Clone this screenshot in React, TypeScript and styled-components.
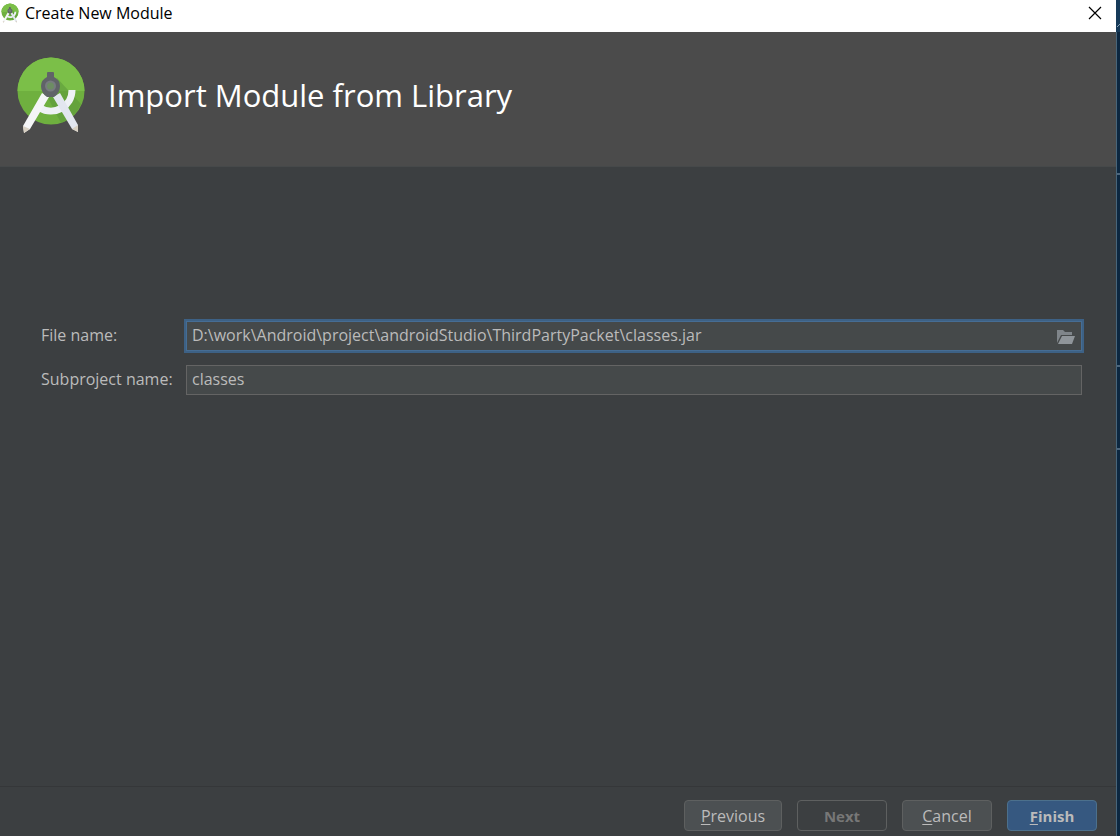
import React from 'react';
import styled, { createGlobalStyle } from 'styled-components';

const GlobalStyle = createGlobalStyle`
  * { box-sizing: border-box; }
  body {
    margin: 0;
    background: #0c2740;
    font-family: "Open Sans", "Noto Sans", sans-serif;
    font-size: 16px;
    line-height: 20px;
  }
  button, input { font: inherit; }
`;

const Desktop = styled.div`
  display: flex;
  min-height: 100vh;
`;

const Dialog = styled.main`
  flex: 1;
  min-width: 0;
  display: flex;
  flex-direction: column;
  background: #3c3f41;
  color: #bbbbbb;
`;

const Backdrop = styled.svg`
  flex: none;
  width: 4px;
  height: 836px;
`;

const TitleBar = styled.div`
  display: flex;
  align-items: center;
  gap: 5px;
  height: 32px;
  padding: 0 14px 6px 0;
  background: #ffffff;
  color: #000000;
`;

const WindowTitle = styled.span`
  flex: 1;
`;

const CloseButton = styled.button`
  display: flex;
  padding: 0;
  border: 0;
  background: none;
  color: #000000;
`;

const Header = styled.header`
  display: flex;
  align-items: flex-start;
  gap: 22px;
  height: 135px;
  padding: 24px 16px;
  background: #4b4b4b;
  border-bottom: 1px solid #46494a;
`;

const Heading = styled.h1`
  margin: 16px 0 0;
  color: #ffffff;
  font-size: 31px;
  font-weight: 400;
  line-height: 46px;
`;

const Form = styled.form`
  flex: 1;
  display: flex;
  flex-direction: column;
  gap: 14px;
  padding: 154px 34px 0 41px;
`;

const Field = styled.div`
  display: flex;
  align-items: center;
`;

const Label = styled.label`
  flex: none;
  width: 145px;
  padding-bottom: 2px;
`;

const InputBox = styled.div<{ $focused?: boolean }>`
  flex: 1;
  display: flex;
  align-items: center;
  height: 30px;
  padding: 0 5px;
  background: #45494a;
  border: 1px solid ${(p) => (p.$focused ? '#466d94' : '#646464')};
  box-shadow: ${(p) => (p.$focused ? '0 0 0 2px #3d6185' : 'none')};
`;

const TextInput = styled.input`
  flex: 1;
  min-width: 0;
  height: 26px;
  padding: 0 0 2px;
  border: 0;
  outline: 0;
  background: none;
  color: #bbbbbb;
`;

const BrowseButton = styled.button`
  display: flex;
  padding: 2px 0 0;
  border: 0;
  background: none;
`;

const Footer = styled.footer`
  display: flex;
  justify-content: flex-end;
  gap: 15px;
  padding: 13px 19px 5px;
  border-top: 1px solid #353739;
`;

const Button = styled.button<{ $primary?: boolean; $wide?: boolean }>`
  width: ${(p) => (p.$wide ? 98 : 90)}px;
  height: 31px;
  padding: 0;
  border: 1px solid ${(p) => (p.$primary ? '#4c708c' : '#5e6060')};
  border-radius: 4px;
  background: ${(p) => (p.$primary ? '#365880' : '#4c5052')};
  color: #bbbbbb;
  font-size: ${(p) => (p.$primary || p.disabled ? 15 : 16)}px;
  font-weight: ${(p) => (p.$primary ? 700 : 400)};

  &:disabled {
    background: #3c3f41;
    color: #777777;
    font-weight: 700;
  }
`;

const Mnemonic = styled.span`
  text-decoration: underline;
  text-decoration-thickness: 1px;
  text-underline-offset: 2px;
`;

function StudioLogo({ width, height }: { width: number; height: number }) {
  return (
    <svg width={width} height={height} viewBox="0 0 70 78" aria-hidden="true">
      <circle cx="35" cy="35" r="33.5" fill="#6fb03f" />
      <path d="M1.5 35a33.500 33.500 0 0 1 67 0z" fill="#7bbf48" />
      <path d="M41 22 65 48A33.500 33.500 0 0 1 45 67L32 42z" fill="#5b983b" opacity=".55" />
      <path d="M56 34A21 21 0 0 1 24 52" fill="none" stroke="#eef1f5" strokeWidth="7" />
      <path d="M26 37 33 41 14 73 8 77 7 70z" fill="#f4f5f7" />
      <path d="M37 41 44 37 62 69 62 76 56 73z" fill="#e2e6ef" />
      <path d="M7 70 14 73 8 77zM62 69 56 73 62 76z" fill="#d8d0c2" />
      <path d="M31 17q0-1 1-1h5q1 0 1 1v4q6 3 6 9 0 7-6 11h-7q-6-4-6-11 0-6 6-9z" fill="#606368" />
      <circle cx="34.500" cy="30" r="4.500" fill="#6d8d63" stroke="#777b7f" strokeWidth="2" />
    </svg>
  );
}

function FolderIcon() {
  return (
    <svg width="20" height="16" viewBox="0 0 20 16" aria-hidden="true">
      <path d="M1 14V1h6l2 2h7v3H5z" fill="#7f858a" />
      <path d="M6 7h13l-3 8H2z" fill="#8f959a" />
    </svg>
  );
}

export default function App() {
  return (
    <>
      <GlobalStyle />
      <Desktop>
        <Dialog>
          <TitleBar>
            <StudioLogo width={20} height={20} />
            <WindowTitle>Create New Module</WindowTitle>
            <CloseButton type="button" aria-label="Close">
              <svg width="14" height="14" viewBox="0 0 14 14" aria-hidden="true">
                <path d="M1 1 13 13M13 1 1 13" stroke="currentColor" strokeWidth="1.200" />
              </svg>
            </CloseButton>
          </TitleBar>
          <Header>
            <StudioLogo width={70} height={78} />
            <Heading>Import Module from Library</Heading>
          </Header>
          <Form id="module-form" onSubmit={(e) => e.preventDefault()}>
            <Field>
              <Label htmlFor="file-name">File name:</Label>
              <InputBox $focused>
                <TextInput
                  id="file-name"
                  spellCheck={false}
                  defaultValue={'D:\\work\\Android\\project\\androidStudio\\ThirdPartyPacket\\classes.jar'}
                />
                <BrowseButton type="button" aria-label="Browse">
                  <FolderIcon />
                </BrowseButton>
              </InputBox>
            </Field>
            <Field>
              <Label htmlFor="subproject-name">Subproject name:</Label>
              <InputBox>
                <TextInput id="subproject-name" spellCheck={false} defaultValue="classes" />
              </InputBox>
            </Field>
          </Form>
          <Footer>
            <Button type="button" $wide>
              <Mnemonic>P</Mnemonic>revious
            </Button>
            <Button type="button" disabled>Next</Button>
            <Button type="button">
              <Mnemonic>C</Mnemonic>ancel
            </Button>
            <Button type="submit" form="module-form" $primary>
              <Mnemonic>F</Mnemonic>inish
            </Button>
          </Footer>
        </Dialog>
        <Backdrop viewBox="0 0 4 836" aria-hidden="true">
          <path d="M0 0h4v836H0z" fill="#0c2740" />
          <path d="M0 0h4v32H0z" fill="#163a59" />
          <path d="M0 32h1v804H0z" fill="#48657a" />
          <path d="M1 27 4 24M1 174h3M1 366h3M1 449h3" stroke="#8aa4b8" />
        </Backdrop>
      </Desktop>
    </>
  );
}
